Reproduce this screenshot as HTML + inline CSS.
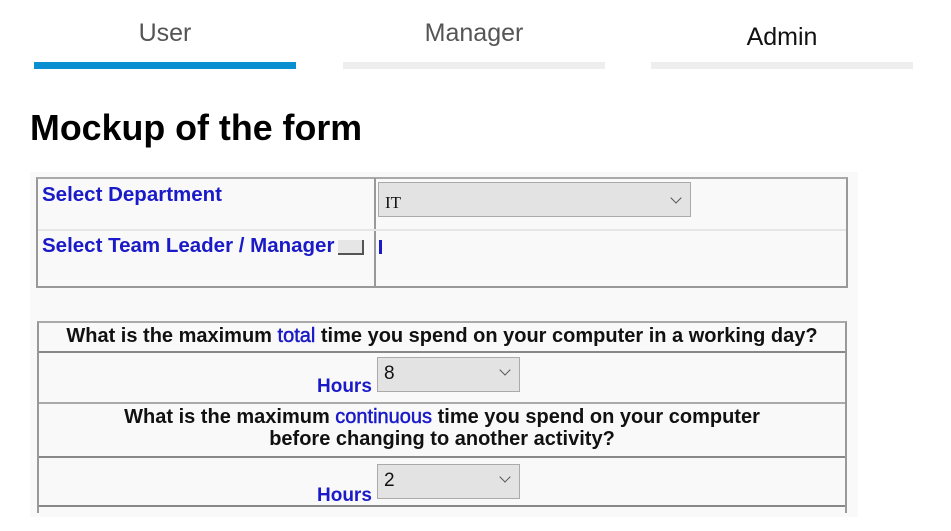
<!DOCTYPE html>
<html><head><style>
*{margin:0;padding:0;box-sizing:border-box}
body{width:951px;height:531px;background:#fff;position:relative;overflow:hidden;font-family:"Liberation Sans",Arial,sans-serif}
.a{position:absolute}
.tab{font-size:25px;color:#555;text-align:center;width:262px}
.bar{height:7px;background:#eee;top:62px;width:262px}
.lb{color:#1a1ac8;font-weight:bold;font-size:20.5px;white-space:nowrap}
.q{font-weight:bold;font-size:20px;color:#111;text-align:center;white-space:nowrap}
.sel{background:#e3e3e3;border:1px solid #aaa;font-size:19px;color:#111}
.chev{position:absolute;right:10px;top:8px;width:8px;height:8px;border-right:1.5px solid #555;border-bottom:1.5px solid #555;transform:rotate(45deg)}
.bd{border:2px solid #999;border-top-color:#aaa}
.bl{color:#1a1ac8;font-weight:normal;-webkit-text-stroke:0.5px #1a1ac8}
</style></head><body>
<div class="a tab" style="left:34px;top:19px">User</div>
<div class="a tab" style="left:343px;top:19px">Manager</div>
<div class="a tab" style="left:651px;top:23px;color:#111">Admin</div>
<div class="a bar" style="left:34px;background:#0a8fd0"></div>
<div class="a bar" style="left:343px"></div>
<div class="a bar" style="left:651px"></div>
<div class="a" style="left:30px;top:108px;font-size:35.8px;font-weight:bold;color:#000">Mockup of the form</div>

<div class="a" style="left:30px;top:172px;width:828px;height:345px;background:#f9f9f9"></div>
<div class="a bd" style="left:36px;top:177px;width:812px;height:111px"></div>
<div class="a" style="left:374px;top:178px;width:2px;height:108px;background:#999"></div>
<div class="a" style="left:38px;top:229px;width:808px;height:2px;background:#e6e6e6"></div>
<div class="a lb" style="left:42px;top:183px">Select Department</div>
<div class="a sel" style="left:378px;top:182px;width:313px;height:35px;padding:10px 0 0 6px;font-family:'Liberation Serif',serif;font-size:17px">IT<div class="chev" style="top:11px"></div></div>
<div class="a lb" style="left:42px;top:234px">Select Team Leader / Manager</div>
<div class="a" style="left:338px;top:240px;width:26px;height:15px;background:#e6e6e6;border-right:2px solid #555;border-bottom:2px solid #555"></div>
<div class="a" style="left:379px;top:240px;width:3px;height:14px;background:#1a1ac8"></div>

<div class="a bd" style="left:37px;top:321px;width:810px;height:192px;border-bottom:none"></div>
<div class="a" style="left:39px;top:351px;width:806px;height:2px;background:#888"></div>
<div class="a" style="left:39px;top:402px;width:806px;height:2px;background:#aaa"></div>
<div class="a" style="left:39px;top:456px;width:806px;height:2px;background:#888"></div>
<div class="a" style="left:39px;top:505px;width:806px;height:2px;background:#888"></div>
<div class="a q" style="left:39px;top:325px;width:806px">What is the maximum <span class="bl">total</span> time you spend on your computer in a working day?</div>
<div class="a lb" style="left:317px;top:376px;font-size:19px">Hours</div>
<div class="a sel" style="left:377px;top:357px;width:143px;height:35px;padding:5px 0 0 6px">8<div class="chev"></div></div>
<div class="a q" style="left:39px;top:406px;width:806px;line-height:22px">What is the maximum <span class="bl">continuous</span> time you spend on your computer<br>before changing to another activity?</div>
<div class="a lb" style="left:317px;top:485px;font-size:19px">Hours</div>
<div class="a sel" style="left:377px;top:464px;width:143px;height:35px;padding:5px 0 0 6px">2<div class="chev"></div></div>
</body></html>
